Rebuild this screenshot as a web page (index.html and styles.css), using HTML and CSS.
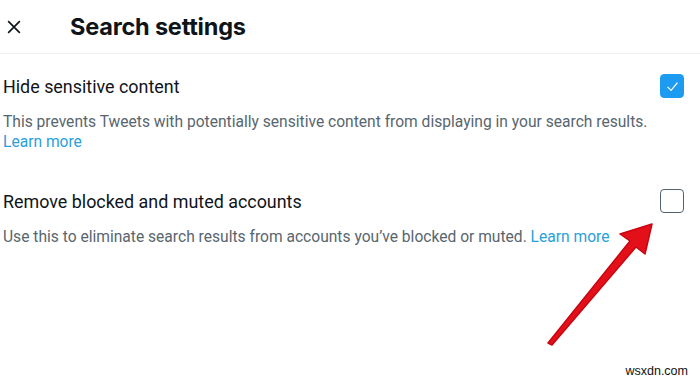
FILE: index.html
```html
<!DOCTYPE html>
<html lang="en">
<head>
  <meta charset="UTF-8">
  <title>Search settings</title>
  <link rel="stylesheet" href="styles.css">
</head>
<body>
  <header class="topbar">
    <button class="close-btn" aria-label="Close">
      <svg viewBox="0 0 24 24" width="20" height="20"><path d="M5 5 L19 19 M19 5 L5 19" stroke="#0f1419" stroke-width="2" fill="none"/></svg>
    </button>
    <h1>Search settings</h1>
  </header>

  <div class="settings">
    <div class="setting">
      <div class="setting-row">
        <span class="setting-title">Hide sensitive content</span>
        <span class="check checked">
          <svg viewBox="0 0 24 24" width="17" height="17"><path d="M5 12.5 L10 17.5 L19 6.5" stroke="#fff" stroke-width="1.8" fill="none"/></svg>
        </span>
      </div>
      <p class="setting-desc">This prevents Tweets with potentially sensitive content from displaying in your search results. <a href="#">Learn more</a></p>
    </div>

    <div class="setting">
      <div class="setting-row">
        <span class="setting-title">Remove blocked and muted accounts</span>
        <span class="check"></span>
      </div>
      <p class="setting-desc">Use this to eliminate search results from accounts you’ve blocked or muted. <a href="#">Learn more</a></p>
    </div>
  </div>

  <svg class="arrow" viewBox="0 0 700 379" width="700" height="379">
    <path d="M652 224 L620 234 L630 241 L548 343 L552 345 L636 247 L645 254 Z" fill="#e3101a" stroke="#c8060f" stroke-width="1.5" stroke-linejoin="round"/>
  </svg>

  <div class="watermark">wsxdn.com</div>
</body>
</html>
```

FILE: styles.css
```css
body {
  margin: 0;
  font-family: Roboto, 'Noto Sans', sans-serif;
  background: #fff;
  color: #0f1419;
  width: 700px;
  height: 379px;
  overflow: hidden;
  position: relative;
}
.topbar {
  display: flex;
  align-items: center;
  height: 53px;
  border-bottom: 1px solid #eceff1;
}
.close-btn {
  background: none;
  border: none;
  padding: 0;
  margin-left: 4px;
  width: 20px;
  height: 20px;
  display: flex;
}
.topbar h1 {
  margin: 0 0 0 46px;
  font-family: Inter, sans-serif;
  font-size: 23.5px;
  font-weight: 700;
  letter-spacing: -0.2px;
}
.settings {
  padding: 21px 16px 0 3px;
  display: flex;
  flex-direction: column;
  gap: 38px;
}
.setting-row {
  display: flex;
  align-items: center;
  justify-content: space-between;
  height: 22px;
}
.setting-title {
  font-size: 17.9px;
}
.check {
  box-sizing: border-box;
  width: 24px;
  height: 24px;
  border: 1.5px solid #536471;
  border-radius: 4px;
  display: flex;
  align-items: center;
  justify-content: center;
}
.check.checked {
  background: #1d9bf0;
  border-color: #1d9bf0;
}
.setting-desc {
  margin: 15px 0 0;
  font-size: 15.6px;
  line-height: 20px;
  color: #58666f;
}
.setting-desc a {
  color: #2a9fdc;
  text-decoration: none;
}
.arrow {
  position: absolute;
  left: 0;
  top: 0;
}
.watermark {
  position: absolute;
  right: 12px;
  bottom: 1px;
  font-family: 'Liberation Sans', sans-serif;
  font-size: 12.5px;
  color: #111;
}
```
